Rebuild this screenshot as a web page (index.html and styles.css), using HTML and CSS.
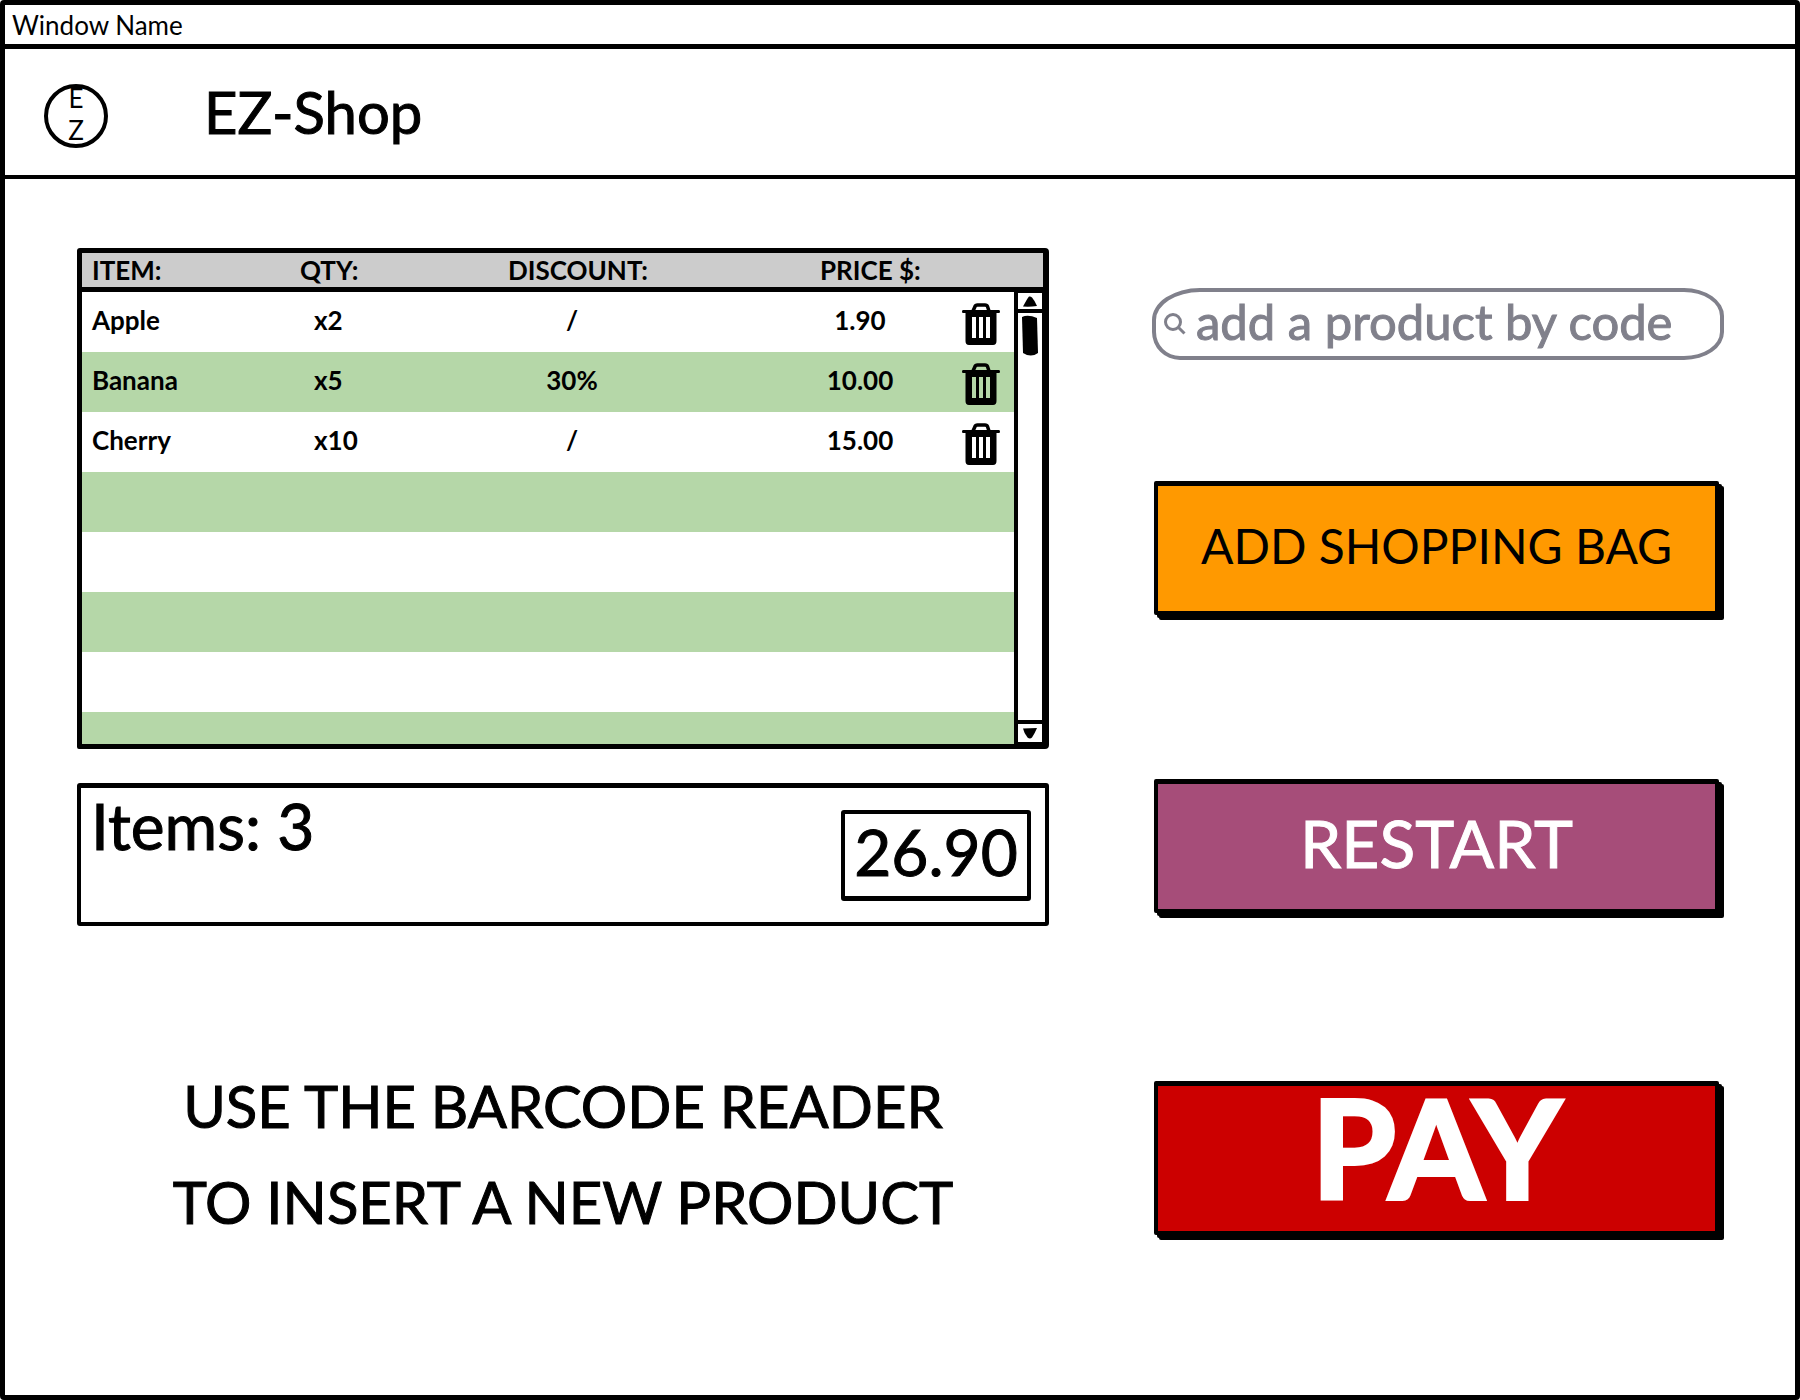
FILE: index.html
```html
<!DOCTYPE html>
<html lang="en">
<head>
<meta charset="utf-8">
<title>EZ-Shop</title>
<link rel="stylesheet" href="styles.css">
</head>
<body>
<svg class="defs" aria-hidden="true">
  <symbol id="trash" viewBox="0 0 38 42">
    <path d="M11 8 L13 3.500 Q13.500 2 15.500 2 H23 Q25 2 25.500 3.500 L27 8" fill="none" stroke="#000" stroke-width="3.500"/>
    <path fill-rule="evenodd" d="M1 7 H37 Q38 7 38 8.500 Q38 10 37 10 H34.500 V38 Q34.500 42 31 42 H7 Q3.500 42 3.500 38 V10 H1 Q0 10 0 8.500 Q0 7 1 7 Z M10 14 V35 H14 V14 Z M17 14 V35 H21 V14 Z M24 14 V35 H28 V14 Z"/>
  </symbol>
</svg>
<div class="window">
  <div class="titlebar">Window Name</div>
  <header class="header">
    <div class="logo"><span>E</span><span>Z</span></div>
    <h1 class="brand">EZ-Shop</h1>
  </header>
  <main class="main">
    <section class="left">
      <div class="list">
        <table class="items">
          <colgroup><col class="c-item"><col class="c-qty"><col class="c-discount"><col class="c-price"><col class="c-action"></colgroup>
          <thead>
            <tr><th>ITEM:</th><th>QTY:</th><th>DISCOUNT:</th><th>PRICE $:</th><th></th></tr>
          </thead>
          <tbody>
            <tr><td>Apple</td><td class="qty">x2</td><td class="discount">/</td><td class="price">1.90</td><td class="action"><button class="remove" aria-label="Remove Apple"><svg><use href="#trash"/></svg></button></td></tr>
            <tr><td>Banana</td><td class="qty">x5</td><td class="discount">30%</td><td class="price">10.00</td><td class="action"><button class="remove" aria-label="Remove Banana"><svg><use href="#trash"/></svg></button></td></tr>
            <tr><td>Cherry</td><td class="qty">x10</td><td class="discount">/</td><td class="price">15.00</td><td class="action"><button class="remove" aria-label="Remove Cherry"><svg><use href="#trash"/></svg></button></td></tr>
            <tr><td colspan="5"></td></tr>
            <tr><td colspan="5"></td></tr>
            <tr><td colspan="5"></td></tr>
            <tr><td colspan="5"></td></tr>
            <tr><td colspan="5"></td></tr>
          </tbody>
        </table>
        <div class="scrollbar">
          <button class="step up" aria-label="Scroll up"><svg viewBox="0 0 14 11"><path d="M0 10.500 Q4 3 6 .500 Q7.500 0 9 1.500 Q12 5 14 10 Q7 11 0 10.500Z"/></svg></button>
          <div class="track"><svg class="thumb" viewBox="0 0 16 41"><path d="M0 2 Q6 -1 15 3 L16 38 Q9 43 1 38 Z"/></svg></div>
          <button class="step down" aria-label="Scroll down"><svg viewBox="0 0 14 11"><path d="M0 .500 Q7 0 14 0 Q12 5 9 9.500 Q7 11.500 4.500 9.500 Q1 5 0 .500Z"/></svg></button>
        </div>
      </div>
      <div class="summary">
        <div class="count">Items: 3</div>
        <output class="total">26.90</output>
      </div>
      <p class="hint">USE THE BARCODE READER<br>TO INSERT A NEW PRODUCT</p>
    </section>
    <aside class="right">
      <label class="search">
        <svg class="glass" viewBox="0 0 22 22" aria-hidden="true"><circle cx="9" cy="9" r="7.500"/><path d="M14.500 14.500 L20.500 20.500"/></svg>
        <input type="text" placeholder="add a product by code" aria-label="Product code">
      </label>
      <button class="btn bag">ADD SHOPPING BAG</button>
      <button class="btn restart">RESTART</button>
      <button class="btn pay">PAY</button>
    </aside>
  </main>
</div>
</body>
</html>
```
FILE: styles.css
```css
* { box-sizing: border-box; }

body {
  margin: 0;
  background: #fff;
  color: #000;
  font-family: Lato, "Open Sans", sans-serif;
}

button, input { font: inherit; color: inherit; }
button { padding: 0; background: none; border: 0; }

.defs { position: absolute; width: 0; height: 0; }

.window {
  min-height: 100vh;
  border: 5px solid #000;
  border-radius: 4px;
  padding-bottom: 40px;
}

.titlebar {
  height: 44px;
  padding-left: 7px;
  border-bottom: 5px solid #000;
  font-size: 26px;
  line-height: 40px;
}

.header {
  display: flex;
  align-items: center;
  height: 130px;
  padding: 0 39px;
  border-bottom: 4px solid #000;
}

.logo {
  display: flex;
  flex-direction: column;
  align-items: center;
  width: 64px;
  height: 64px;
  margin-top: 8px;
  border: 4px solid #000;
  border-radius: 50%;
  font-size: 26px;
  line-height: 32px;
}
.logo span:first-child { margin-top: -6px; }

.brand {
  margin: 0 0 0 96px;
  font-size: 58px;
  font-weight: 400;
  line-height: 64px;
  -webkit-text-stroke: 1px;
}

.main {
  display: grid;
  grid-template-columns: minmax(0, 972fr) minmax(0, 570fr);
  gap: 105px;
  padding: 69px 71px 0 72px;
}

/* Item list */
.list {
  position: relative;
  height: 501px;
  overflow: hidden;
  border: 5px solid #000;
  border-right-width: 6px;
  border-radius: 3px 4px 4px 2px;
}

.items {
  width: 100%;
  table-layout: fixed;
  border-collapse: separate;
  border-spacing: 0;
  font-size: 26px;
  font-weight: 700;
  line-height: 32px;
}
.c-item, .c-qty { width: 208px; }
.c-discount { width: 312px; }
.c-price { width: 140px; }

.items th {
  height: 39px;
  padding: 0 0 0 10px;
  background: #ccc;
  border-bottom: 5px solid #000;
  text-align: left;
  white-space: nowrap;
}
.items td { height: 60px; padding: 0 0 4px 10px; }
.items tbody tr:nth-child(even) { background: #b5d7a8; }
.items .qty { padding-left: 24px; }
.items .discount { padding: 0 164px 4px 0; text-align: center; }
.items .price { padding: 0 40px 4px 0; text-align: center; }
.items .action { padding: 4px 0 0 12px; }

.remove { display: block; width: 38px; height: 42px; }
.remove svg { display: block; width: 38px; height: 42px; }

.scrollbar {
  position: absolute;
  top: 36px;
  right: 0;
  bottom: 0;
  display: flex;
  flex-direction: column;
  width: 29px;
  background: #fff;
  border: 4px solid #000;
  border-width: 4px 1px 2px 4px;
}
.step { display: flex; align-items: center; justify-content: center; }
.step svg { width: 14px; height: 11px; }
.up { height: 20px; border-bottom: 4px solid #000; }
.down { height: 22px; border-top: 4px solid #000; }
.track { flex: 1; padding: 2px 4px; }
.thumb { display: block; width: 16px; height: 41px; }

/* Summary */
.summary {
  display: flex;
  justify-content: space-between;
  height: 143px;
  margin-top: 34px;
  padding: 22px 14px 22px 10px;
  border: 4px solid #000;
  border-top-width: 5px;
  border-radius: 3px;
  font-size: 64px;
  line-height: 72px;
  -webkit-text-stroke: 1px;
}
.count { margin-top: -20px; }
.total {
  width: 190px;
  height: 91px;
  border: 4px solid #000;
  border-bottom-width: 5px;
  border-radius: 3px;
  line-height: 76px;
  text-align: center;
}

.hint {
  margin: 132px 0 0;
  font-size: 58px;
  line-height: 96px;
  text-align: center;
  -webkit-text-stroke: 1px;
}

/* Actions */
.right { display: flex; flex-direction: column; padding-top: 40px; }

.search {
  display: flex;
  align-items: center;
  height: 72px;
  margin-left: -2px;
  padding-left: 8px;
  border: 4px solid #80808b;
  border-radius: 48px 40px 40px 28px / 32px 28px 28px 28px;
  color: #80808b;
}
.glass { flex: none; width: 22px; height: 24px; fill: none; stroke: #80808b; stroke-width: 3; }
.search input {
  flex: 1;
  min-width: 0;
  height: 60px;
  margin-left: 10px;
  padding: 0 0 6px;
  border: 0;
  outline: 0;
  background: none;
  font-size: 49px;
  -webkit-text-stroke: 1px;
}
.search input::placeholder { color: #80808b; opacity: 1; }

.btn {
  height: 134px;
  margin-right: 5px;
  border: 4px solid #000;
  border-width: 5px 4px 4px;
  border-radius: 2px;
  box-shadow: 3px 3px #000, 5px 5px #000;
}
.bag { margin-top: 121px; padding-bottom: 6px; background: #ff9900; font-size: 48px; }
.restart { margin-top: 164px; padding-bottom: 8px; background: #a64d79; color: #fff; font-size: 66px; -webkit-text-stroke: 1px; }
.pay { height: 154px; margin-top: 168px; padding-bottom: 24px; background: #cc0000; color: #fff; font-size: 136px; font-weight: 700; line-height: 120px; -webkit-text-stroke: 4px; }
```
